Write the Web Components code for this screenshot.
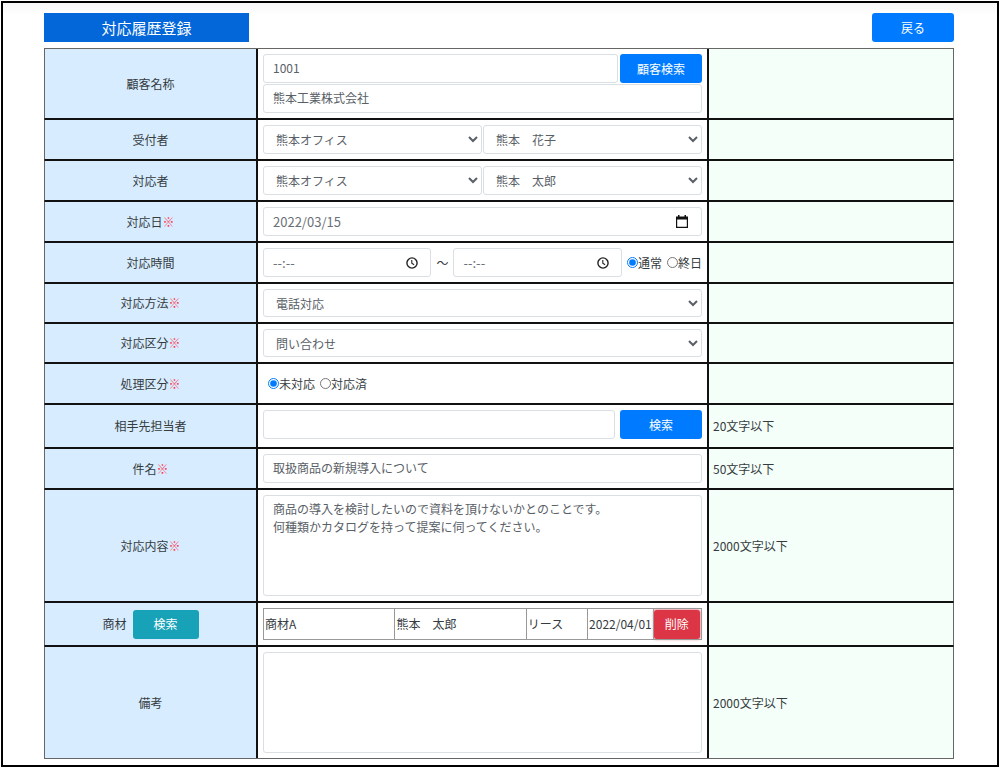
<!DOCTYPE html>
<html lang="ja">
<head>
<meta charset="utf-8">
<title>対応履歴登録</title>
<style>
  body { margin: 0; background: #fff; font-family: "Noto Sans CJK JP", sans-serif; }
</style>
</head>
<body>
<history-form></history-form>

<template id="button-template">
  <style>
    :host { display: block; width: 82px; flex: none; --button-color: #007bff; }
    :host([variant="info"]) { width: 66px; --button-color: #17a2b8; }
    :host([variant="danger"]) { width: 46px; --button-color: #dc3545; }
    :host([variant="danger"]) button { box-shadow: 0 0 2px 1px rgba(220, 53, 69, .5); }
    button {
      display: block; width: 100%; height: 29px; padding: 0; border: 0; border-radius: 3px;
      background: var(--button-color); color: #fff; font-family: inherit;
      font-size: 12px; line-height: 18px; cursor: pointer;
    }
  </style>
  <button type="button"><slot></slot></button>
</template>

<template id="row-template">
  <style>
    :host {
      display: grid; grid-template-columns: 212fr 451fr 245fr; box-sizing: border-box;
      border: 1px solid #111; border-left-color: #666; border-right-color: #666;
      font-size: 12px; line-height: 18px; color: #363b40;
    }
    .label, .note { display: flex; align-items: center; }
    .label { justify-content: center; background: #d7edff; border-right: 1px solid #111; }
    .mark { color: #ff3b52; }
    .mark[hidden] { display: none; }
    .field { min-width: 0; padding: 5px; border: solid #111; border-width: 0 1px; }
    .note { padding: 0 4px; background: #f4fff9; border-left: 1px solid #111; }
  </style>
  <div class="label"><slot name="label"></slot><span class="mark" hidden>※</span></div>
  <div class="field"><slot></slot></div>
  <div class="note"><slot name="note"></slot></div>
</template>

<template id="picker-template">
  <style>
    :host {
      display: flex; align-items: center; box-sizing: border-box; min-width: 0; height: 29px;
      padding: 0 12px 0 9px; border: 1px solid #dadfe4; border-radius: 3px; background: #fff;
    }
    input {
      flex: 1; min-width: 0; padding: 0; border: 0; outline: 0; background: none;
      font-family: inherit; font-size: 13px; line-height: 18px; color: #6a7077;
    }
    input::placeholder { color: #6a7077; opacity: 1; }
    button { display: block; flex: none; padding: 0; border: 0; background: none; }
    svg { display: block; }
    svg[hidden] { display: none; }
  </style>
  <input type="text">
  <button type="button">
    <svg class="date" width="14" height="14" viewBox="0 0 14 14" hidden>
      <path d="M3 0h1.5v1.5h5V0H11v1.5h2V13H1V1.5h2zM2.2 4.6v7.2h9.6V4.6z" fill="#111" fill-rule="evenodd"/>
    </svg>
    <svg class="time" width="12" height="12" viewBox="0 0 12 12" hidden>
      <circle cx="6" cy="6" r="5.1" fill="none" stroke="#222" stroke-width="1.4"/>
      <path d="M5.8 3v3.3l2.3 1.5" fill="none" stroke="#222" stroke-width="1.1"/>
    </svg>
  </button>
</template>

<template id="product-template">
  <style>
    :host { display: block; }
    table { width: 100%; height: 32px; border-collapse: collapse; table-layout: fixed; font-size: 12px; line-height: 18px; }
    td { padding: 0 0 0 1px; border: 1px solid #999; white-space: nowrap; }
    td:last-child { padding: 0; }
    col.wide { width: 30%; }
    col.kind { width: 14%; }
    col.date { width: 15%; }
  </style>
  <table>
    <colgroup><col class="wide"><col class="wide"><col class="kind"><col class="date"><col></colgroup>
    <tbody><tr>
      <td>商材A</td><td>熊本　太郎</td><td>リース</td><td>2022/04/01</td>
      <td><app-button variant="danger">削除</app-button></td>
    </tr></tbody>
  </table>
</template>

<template id="form-template">
  <style>
    :host {
      display: block; box-sizing: border-box; margin: 1px; padding: 10px 43px 6px 41px;
      border: 2px solid #000; background: linear-gradient(#f7f7f7, #fff 12px);
    }
    header { display: flex; justify-content: space-between; margin-bottom: 6px; }
    h1 {
      width: 205px; height: 29px; margin: 0; background: #0366d9; color: #fff;
      font-size: 15px; line-height: 29px; font-weight: 400; text-align: center;
    }
    input[type="text"], select, textarea {
      display: block; box-sizing: border-box; width: 100%; min-width: 0; height: 29px; margin: 0;
      border: 1px solid #dadfe4; border-radius: 3px; background: #fff; color: #596067;
      font-family: inherit; font-size: 12px; line-height: 18px; padding: 0 9px;
    }
    input[type="text"] { padding-bottom: 2px; }
    select { padding: 0 0 0 8px; }
    select.single { height: 28px; }
    textarea { height: 101px; padding: 4px 9px; resize: none; }
    .line { display: flex; align-items: center; }
    .line > input[type="text"], .line > picker-field { flex: 1; width: auto; }
    .customer { gap: 2px; margin-bottom: 1px; }
    .pair { gap: 1px; }
    .contact { gap: 5px; margin-bottom: 3px; }
    .tilde { width: 22px; text-align: center; }
    .radios { display: flex; align-items: center; gap: 5px; height: 29px; padding-left: 5px; }
    .radios label { display: flex; align-items: center; }
    .radios input { width: 11px; height: 11px; margin: 0; accent-color: #007bff; }
    .product { display: flex; align-items: center; gap: 6px; }
  </style>
  <form>
    <header><h1>対応履歴登録</h1><app-button>戻る</app-button></header>
    <form-rows>
      <form-row>
        <label slot="label" for="customer">顧客名称</label>
        <div class="line customer"><input type="text" id="customer" value="1001"><app-button>顧客検索</app-button></div>
        <input type="text" aria-label="顧客名" value="熊本工業株式会社">
      </form-row>
      <form-row>
        <label slot="label" for="receiver">受付者</label>
        <div class="line pair">
          <select id="receiver"><option>熊本オフィス</option></select>
          <select aria-label="受付者氏名"><option>熊本　花子</option></select>
        </div>
      </form-row>
      <form-row>
        <label slot="label" for="handler">対応者</label>
        <div class="line pair">
          <select id="handler"><option>熊本オフィス</option></select>
          <select aria-label="対応者氏名"><option>熊本　太郎</option></select>
        </div>
      </form-row>
      <form-row required>
        <label slot="label">対応日</label>
        <picker-field kind="date" label="対応日" value="2022/03/15"></picker-field>
      </form-row>
      <form-row>
        <label slot="label">対応時間</label>
        <div class="line">
          <picker-field kind="time" label="開始時間" placeholder="--:--"></picker-field>
          <span class="tilde">～</span>
          <picker-field kind="time" label="終了時間" placeholder="--:--"></picker-field>
          <div class="radios">
            <label><input type="radio" name="span" checked>通常</label>
            <label><input type="radio" name="span">終日</label>
          </div>
        </div>
      </form-row>
      <form-row required>
        <label slot="label" for="method">対応方法</label>
        <select class="single" id="method"><option>電話対応</option></select>
      </form-row>
      <form-row required>
        <label slot="label" for="category">対応区分</label>
        <select class="single" id="category"><option>問い合わせ</option></select>
      </form-row>
      <form-row required>
        <span slot="label">処理区分</span>
        <div class="radios">
          <label><input type="radio" name="status" checked>未対応</label>
          <label><input type="radio" name="status">対応済</label>
        </div>
      </form-row>
      <form-row>
        <label slot="label" for="contact">相手先担当者</label>
        <div class="line contact"><input type="text" id="contact"><app-button>検索</app-button></div>
        <span slot="note">20文字以下</span>
      </form-row>
      <form-row required>
        <label slot="label" for="subject">件名</label>
        <input type="text" id="subject" value="取扱商品の新規導入について">
        <span slot="note">50文字以下</span>
      </form-row>
      <form-row required>
        <label slot="label" for="content">対応内容</label>
        <textarea id="content">商品の導入を検討したいので資料を頂けないかとのことです。
何種類かカタログを持って提案に伺ってください。</textarea>
        <span slot="note">2000文字以下</span>
      </form-row>
      <form-row>
        <span slot="label" class="product">商材<app-button variant="info">検索</app-button></span>
        <product-list></product-list>
      </form-row>
      <form-row>
        <label slot="label" for="remarks">備考</label>
        <textarea id="remarks"></textarea>
        <span slot="note">2000文字以下</span>
      </form-row>
    </form-rows>
  </form>
</template>

<template id="rows-template">
  <style>
    :host { display: block; }
    ::slotted(:first-child) { border-top-color: #666; }
    ::slotted(:last-child) { border-bottom-color: #666; }
  </style>
  <slot></slot>
</template>

<script>
  class TemplateElement extends HTMLElement {
    constructor() {
      super();
      const template = document.getElementById(this.constructor.template);
      this.attachShadow({ mode: "open" }).append(template.content.cloneNode(true));
    }
  }

  class AppButton extends TemplateElement { static template = "button-template"; }

  class FormRows extends TemplateElement { static template = "rows-template"; }

  class FormRow extends TemplateElement {
    static template = "row-template";
    connectedCallback() {
      this.shadowRoot.querySelector(".mark").hidden = !this.hasAttribute("required");
    }
  }

  class PickerField extends TemplateElement {
    static template = "picker-template";
    connectedCallback() {
      const input = this.shadowRoot.querySelector("input");
      const label = this.getAttribute("label");
      input.value = this.getAttribute("value") || "";
      input.placeholder = this.getAttribute("placeholder") || "";
      input.setAttribute("aria-label", label);
      this.shadowRoot.querySelector("button").setAttribute("aria-label", label + "を選択");
      this.shadowRoot.querySelector("svg." + this.getAttribute("kind")).removeAttribute("hidden");
    }
  }

  class ProductList extends TemplateElement { static template = "product-template"; }

  class HistoryForm extends TemplateElement { static template = "form-template"; }

  customElements.define("app-button", AppButton);
  customElements.define("form-row", FormRow);
  customElements.define("form-rows", FormRows);
  customElements.define("picker-field", PickerField);
  customElements.define("product-list", ProductList);
  customElements.define("history-form", HistoryForm);
</script>
</body>
</html>
